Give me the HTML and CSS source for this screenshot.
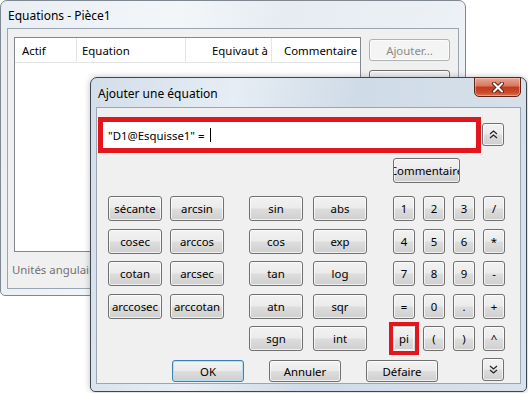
FILE: index.html
```html
<!DOCTYPE html>
<html lang="fr">
<head>
  <meta charset="UTF-8">
  <meta name="viewport" content="width=device-width, initial-scale=1.0">
  <title>Equations - Pièce1</title>
  <link rel="stylesheet" href="styles.css">
</head>
<body>

  <!-- Fenêtre principale (inactive) -->
  <div class="window window-back">
    <div class="titlebar">Equations - Pièce1</div>
    <div class="client client-back">
      <div class="back-main">
        <div class="listview">
          <div class="lv-head">
            <div class="col col-actif">Actif</div>
            <div class="col col-eq">Equation</div>
            <div class="col col-val">Equivaut à</div>
            <div class="col col-com">Commentaire</div>
          </div>
        </div>
        <div class="side-btns">
          <button class="btn btn-side" disabled>Ajouter...</button>
          <button class="btn btn-side">Modifier...</button>
        </div>
      </div>
      <div class="units">Unités angulaires</div>
    </div>
  </div>

  <!-- Boîte de dialogue active -->
  <div class="window window-front">
    <div class="titlebar">Ajouter une équation</div>
    <div class="close-btn">
      <svg width="14" height="11" viewBox="0 0 14 11">
        <path d="M3 1.5 L11 9.5 M11 1.5 L3 9.5" stroke="#6b2417" stroke-width="4" stroke-linecap="round"/>
        <path d="M3 1.5 L11 9.5 M11 1.5 L3 9.5" stroke="#fff" stroke-width="2" stroke-linecap="round"/>
      </svg>
    </div>

    <div class="client client-front">
      <div class="input-row">
        <div class="eq-input">"D1@Esquisse1" = <span class="caret"></span></div>
        <button class="btn btn-small btn-toggle">
          <svg width="9" height="9" viewBox="0 0 9 9">
            <path d="M1 4 L4.5 1 L8 4 M1 8 L4.5 5 L8 8" fill="none" stroke="#222" stroke-width="1.2"/>
          </svg>
        </button>
      </div>

      <div class="comment-row">
        <button class="btn btn-comment"><span>Commentaire</span></button>
      </div>

      <div class="pad">
        <div class="group group-fn">
          <button class="btn">sécante</button>
          <button class="btn">arcsin</button>
          <button class="btn">cosec</button>
          <button class="btn">arccos</button>
          <button class="btn">cotan</button>
          <button class="btn">arcsec</button>
          <button class="btn">arccosec</button>
          <button class="btn">arccotan</button>
        </div>
        <div class="group group-trig">
          <button class="btn">sin</button>
          <button class="btn">abs</button>
          <button class="btn">cos</button>
          <button class="btn">exp</button>
          <button class="btn">tan</button>
          <button class="btn">log</button>
          <button class="btn">atn</button>
          <button class="btn">sqr</button>
          <button class="btn">sgn</button>
          <button class="btn">int</button>
        </div>
        <div class="group group-num">
          <button class="btn">1</button>
          <button class="btn">2</button>
          <button class="btn">3</button>
          <button class="btn">/</button>
          <button class="btn">4</button>
          <button class="btn">5</button>
          <button class="btn">6</button>
          <button class="btn">*</button>
          <button class="btn">7</button>
          <button class="btn">8</button>
          <button class="btn">9</button>
          <button class="btn">-</button>
          <button class="btn">=</button>
          <button class="btn">0</button>
          <button class="btn">.</button>
          <button class="btn">+</button>
          <button class="btn btn-pi">pi</button>
          <button class="btn">(</button>
          <button class="btn">)</button>
          <button class="btn">^</button>
        </div>
      </div>

      <div class="bottom-row">
        <button class="btn btn-wide btn-default">OK</button>
        <button class="btn btn-wide">Annuler</button>
        <button class="btn btn-wide">Défaire</button>
        <button class="btn btn-small btn-more">
          <svg width="9" height="9" viewBox="0 0 9 9">
            <path d="M1 1 L4.5 4 L8 1 M1 5 L4.5 8 L8 5" fill="none" stroke="#222" stroke-width="1.2"/>
          </svg>
        </button>
      </div>
    </div>
  </div>

</body>
</html>
```

FILE: styles.css
```css
* {
  box-sizing: border-box;
}

body {
  margin: 0;
  width: 528px;
  height: 393px;
  position: relative;
  overflow: hidden;
  background-color: #fff;
  font-family: "Noto Sans", "Open Sans", sans-serif;
  font-size: 11.4px;
  color: #000;
}

/* Fenêtres */
.window {
  position: absolute;
  display: flex;
  flex-direction: column;
  border: 1px solid #5d6873;
  border-radius: 7px 7px 5px 5px;
}

.window-back {
  left: 0;
  top: 0;
  width: 466px;
  height: 296px;
  padding: 0 6px 6px;
  border-color: #7f8891;
  background: linear-gradient(100deg, #e9eef4 0%, #f3f6f9 35%, #e6ecf2 55%, #eef2f6 100%);
}

.window-front {
  left: 90px;
  top: 77px;
  width: 437px;
  height: 315px;
  padding: 0 5px 7px;
  border-color: #3d4752;
  background: linear-gradient(100deg, #d3deea 0%, #e6edf4 30%, #cfdbe7 55%, #d8e2ec 100%);
  box-shadow: 0 0 6px rgba(0, 0, 0, 0.25);
}

.titlebar {
  height: 27px;
  display: flex;
  align-items: center;
  padding-left: 1px;
  padding-top: 2px;
  font-size: 12px;
}

.window-front .titlebar {
  height: 29px;
  padding-left: 2px;
}

.close-btn {
  position: absolute;
  top: -1px;
  right: 5px;
  width: 47px;
  height: 20px;
  display: flex;
  align-items: center;
  justify-content: center;
  border: 1px solid #5e2418;
  border-radius: 0 0 5px 5px;
  background: linear-gradient(180deg, #e9a896 0%, #d77560 45%, #c2391b 50%, #c94b2c 80%, #d8734f 100%);
  box-shadow: inset 0 0 0 1px rgba(255, 220, 200, 0.45);
}

.client {
  flex: 1;
  background-color: #f0f0f0;
  border: 1px solid #9aa6b2;
}

/* Fenêtre Equations */
.back-main {
  display: flex;
  margin: 8px 0 0 6px;
}

.listview {
  width: 347px;
  height: 215px;
  background-color: #fff;
  border: 1px solid #828790;
}

.lv-head {
  display: flex;
  height: 25px;
  border-bottom: 1px solid #e5e5e5;
}

.col {
  display: flex;
  align-items: center;
  border-right: 1px solid #e5e5e5;
}

.col-actif {
  width: 62px;
  padding-left: 7px;
}

.col-eq {
  width: 109px;
  padding-left: 5px;
}

.col-val {
  width: 86px;
  justify-content: flex-end;
  padding-right: 3px;
}

.col-com {
  flex: 1;
  border-right: none;
  padding-left: 12px;
  white-space: nowrap;
}

.side-btns {
  display: flex;
  flex-direction: column;
  gap: 9px;
  margin-left: 8px;
  padding-top: 2px;
}

.units {
  margin-top: 10px;
  padding-left: 4px;
  color: #707070;
  white-space: nowrap;
}

/* Boutons */
.btn {
  display: flex;
  align-items: center;
  justify-content: center;
  padding: 0;
  height: 25px;
  font-family: inherit;
  font-size: 11.4px;
  color: #000;
  border: 1px solid #707070;
  border-radius: 3px;
  background: linear-gradient(180deg, #f2f2f2 0%, #ebebeb 48%, #dddddd 52%, #cfcfcf 100%);
  box-shadow: inset 0 0 0 1px rgba(255, 255, 255, 0.7);
  white-space: nowrap;
}

.btn-side {
  width: 81px;
  height: 22px;
}

.btn-side:disabled {
  color: #8a8a8a;
  border-color: #adb2b5;
  background: #f4f4f4;
}

.btn-small {
  width: 22px;
  height: 23px;
}

.btn-wide {
  width: 72px;
  height: 22px;
}

.btn-default {
  border-color: #3c7fb1;
  box-shadow: inset 0 0 0 1px #b6def5;
}

/* Dialogue */
.client-front {
  display: flex;
  flex-direction: column;
}

.input-row {
  display: flex;
  align-items: center;
  margin: 9px 0 0 1px;
}

.eq-input {
  width: 383px;
  height: 36px;
  display: flex;
  align-items: center;
  padding-left: 5px;
  border: 5px solid #e3151d;
  background-color: #fff;
  white-space: pre;
}

.caret {
  width: 1px;
  height: 14px;
  margin-left: 3px;
  background-color: #000;
}

.btn-toggle {
  margin-left: 1px;
  margin-top: -1px;
}

.comment-row {
  display: flex;
  margin: 5px 0 0 296px;
}

.btn-comment {
  width: 67px;
  overflow: hidden;
}

.pad {
  display: flex;
  margin-top: 13px;
}

.group {
  display: grid;
  grid-auto-rows: 25px;
  row-gap: 7.5px;
  align-content: start;
}

.group .btn {
  height: 25px;
}

.group-fn {
  grid-template-columns: 54px 54px;
  column-gap: 8px;
  margin-left: 11px;
}

.group-trig {
  grid-template-columns: 54px 54px;
  column-gap: 10px;
  margin-left: 25px;
}

.group-num {
  grid-template-columns: 22px 22px 22px 22px;
  column-gap: 8px;
  margin-left: 26px;
}

.btn-pi {
  position: relative;
  border-color: transparent;
}

.btn-pi::after {
  content: "";
  position: absolute;
  left: -5px;
  top: -5px;
  right: -5px;
  bottom: -5px;
  border: 4px solid #e3151d;
}

.bottom-row {
  display: flex;
  align-items: flex-start;
  margin-top: 9px;
}

.bottom-row .btn-wide {
  margin-left: 25px;
}

.bottom-row .btn-default {
  margin-left: 75px;
}

.btn-more {
  margin-left: 44px;
  margin-top: -2px;
}
```
